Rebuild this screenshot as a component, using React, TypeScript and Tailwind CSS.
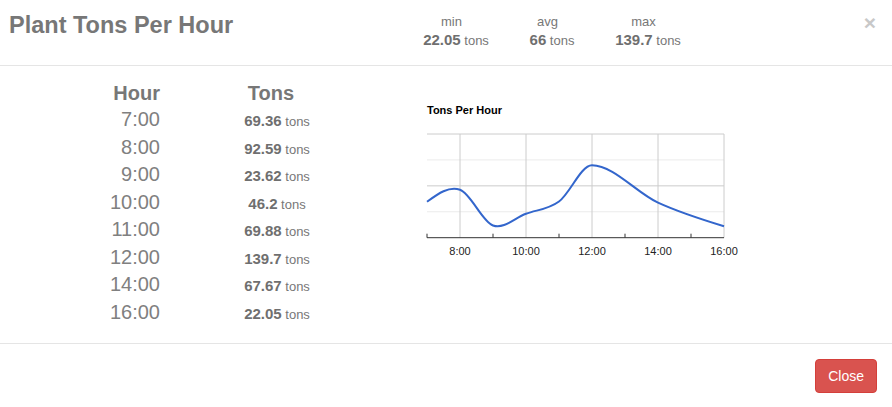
import React from "react";

const rows: [string, string][] = [
  ["7:00", "69.36"],
  ["8:00", "92.59"],
  ["9:00", "23.62"],
  ["10:00", "46.2"],
  ["11:00", "69.88"],
  ["12:00", "139.7"],
  ["14:00", "67.67"],
  ["16:00", "22.05"],
];

const hours = [7, 8, 9, 10, 11, 12, 14, 16];
const X0 = 427;
const XH = 33;
const YB = 237.7;
const YS = 103.7 / 200;

function px(h: number) {
  return X0 + (h - 7) * XH;
}
function py(v: number) {
  return YB - v * YS;
}

function splinePath(pts: [number, number][]) {
  const n = pts.length;
  const t: number[] = new Array(n).fill(0);
  for (let i = 1; i < n - 1; i++) {
    t[i] = (pts[i + 1][1] - pts[i - 1][1]) / (pts[i + 1][0] - pts[i - 1][0]);
  }
  {
    const h = pts[1][0] - pts[0][0];
    t[0] = (3 * (pts[1][1] - pts[0][1]) / h - t[1]) / 2;
    const hl = pts[n - 1][0] - pts[n - 2][0];
    t[n - 1] = (3 * (pts[n - 1][1] - pts[n - 2][1]) / hl - t[n - 2]) / 2;
  }
  let d = `M${pts[0][0]},${pts[0][1]}`;
  for (let i = 0; i < n - 1; i++) {
    const [x0, y0] = pts[i];
    const [x1, y1] = pts[i + 1];
    const dx = (x1 - x0) / 3;
    d += ` C${x0 + dx},${y0 + dx * t[i]} ${x1 - dx},${y1 - dx * t[i + 1]} ${x1},${y1}`;
  }
  return d;
}

function Chart() {
  const pts: [number, number][] = hours.map((h, i) => [px(h), py(parseFloat(rows[i][1]))]);
  const d = splinePath(pts);
  const right = px(16);
  return (
    <svg width={330} height={175} viewBox="410 95 330 175" className="block">
      <text x={427} y={114} fontFamily="Liberation Sans, Arial, sans-serif" fontSize={11} fontWeight="bold" fill="#000">
        Tons Per Hour
      </text>
      {[150, 50].map((v) => (
        <line key={v} x1={X0} x2={right} y1={py(v)} y2={py(v)} stroke="#ebebeb" strokeWidth={1} />
      ))}
      {[200, 100].map((v) => (
        <line key={v} x1={X0} x2={right} y1={py(v)} y2={py(v)} stroke="#cccccc" strokeWidth={1} />
      ))}
      {[8, 10, 12, 14, 16].map((h) => (
        <line key={h} x1={px(h)} x2={px(h)} y1={py(200)} y2={YB} stroke="#cccccc" strokeWidth={1} />
      ))}
      {[7, 9, 11, 13, 15].map((h) => (
        <line key={h} x1={px(h)} x2={px(h)} y1={YB - 4} y2={YB} stroke="#333" strokeWidth={1} />
      ))}
      <line x1={X0} x2={right} y1={YB} y2={YB} stroke="#333" strokeWidth={1} />
      <path d={d} fill="none" stroke="#3366cc" strokeWidth={2} />
      {[8, 10, 12, 14, 16].map((h) => (
        <text
          key={h}
          x={px(h)}
          y={255}
          textAnchor="middle"
          fontFamily="Liberation Sans, Arial, sans-serif"
          fontSize={11}
          fill="#222"
        >
          {h}:00
        </text>
      ))}
    </svg>
  );
}

export default function App() {
  const stats: [string, string][] = [
    ["min", "22.05"],
    ["avg", "66"],
    ["max", "139.7"],
  ];
  return (
    <div className="w-[892px] h-[407px] bg-white flex flex-col text-[#777] [font-family:'Liberation_Sans',Arial,sans-serif]">
      <div className="h-[66px] border-b border-[#e5e5e5] flex items-start shrink-0">
        <div className="w-[407px] pl-[9px] pt-[11px] text-[23.5px] leading-[28px] font-bold text-[#777]">
          Plant Tons Per Hour
        </div>
        {stats.map(([l, v]) => (
          <div key={l} className="w-[96px] flex flex-col items-center pt-[14px]">
            <div className="text-[13px] leading-[16px] text-[#777] pr-[7px]">{l}</div>
            <div className="mt-[1px] leading-[18px] whitespace-nowrap pl-[2px]">
              <span className="text-[15px] font-bold text-[#6f6f6f]">{v}</span>
              <span className="text-[13px] text-[#777]"> tons</span>
            </div>
          </div>
        ))}
        <div className="ml-auto pr-[16px] pt-[12px] text-[21px] leading-[21px] font-bold text-[#c8c8c8]">×</div>
      </div>
      <div className="h-[277px] flex shrink-0">
        <div className="flex flex-col pt-[14px]">
          <div className="flex items-baseline h-[26px] leading-[26px]">
            <div className="w-[160px] text-right text-[20px] font-bold text-[#777]">Hour</div>
            <div className="w-[234px] text-center text-[20px] font-bold text-[#777] pr-[12px]">Tons</div>
          </div>
          {rows.map(([h, v]) => (
            <div key={h} className="flex items-baseline h-[27.5px] leading-[27.5px]">
              <div className="w-[160px] text-right text-[20px] text-[#808080]">{h}</div>
              <div className="w-[234px] text-center whitespace-nowrap">
                <span className="text-[15px] font-bold text-[#6f6f6f]">{v}</span>
                <span className="text-[13px] text-[#777]"> tons</span>
              </div>
            </div>
          ))}
        </div>
        <div className="ml-[16px] mt-[29px]">
          <Chart />
        </div>
      </div>
      <div className="flex-1 border-t border-[#e5e5e5] flex justify-end items-start pt-[15px] pr-[15px]">
        <button className="h-[34px] px-[12px] rounded-[4px] bg-[#d9534f] border border-[#d43f3a] text-white text-[14px] leading-[20px]">
          Close
        </button>
      </div>
    </div>
  );
}
